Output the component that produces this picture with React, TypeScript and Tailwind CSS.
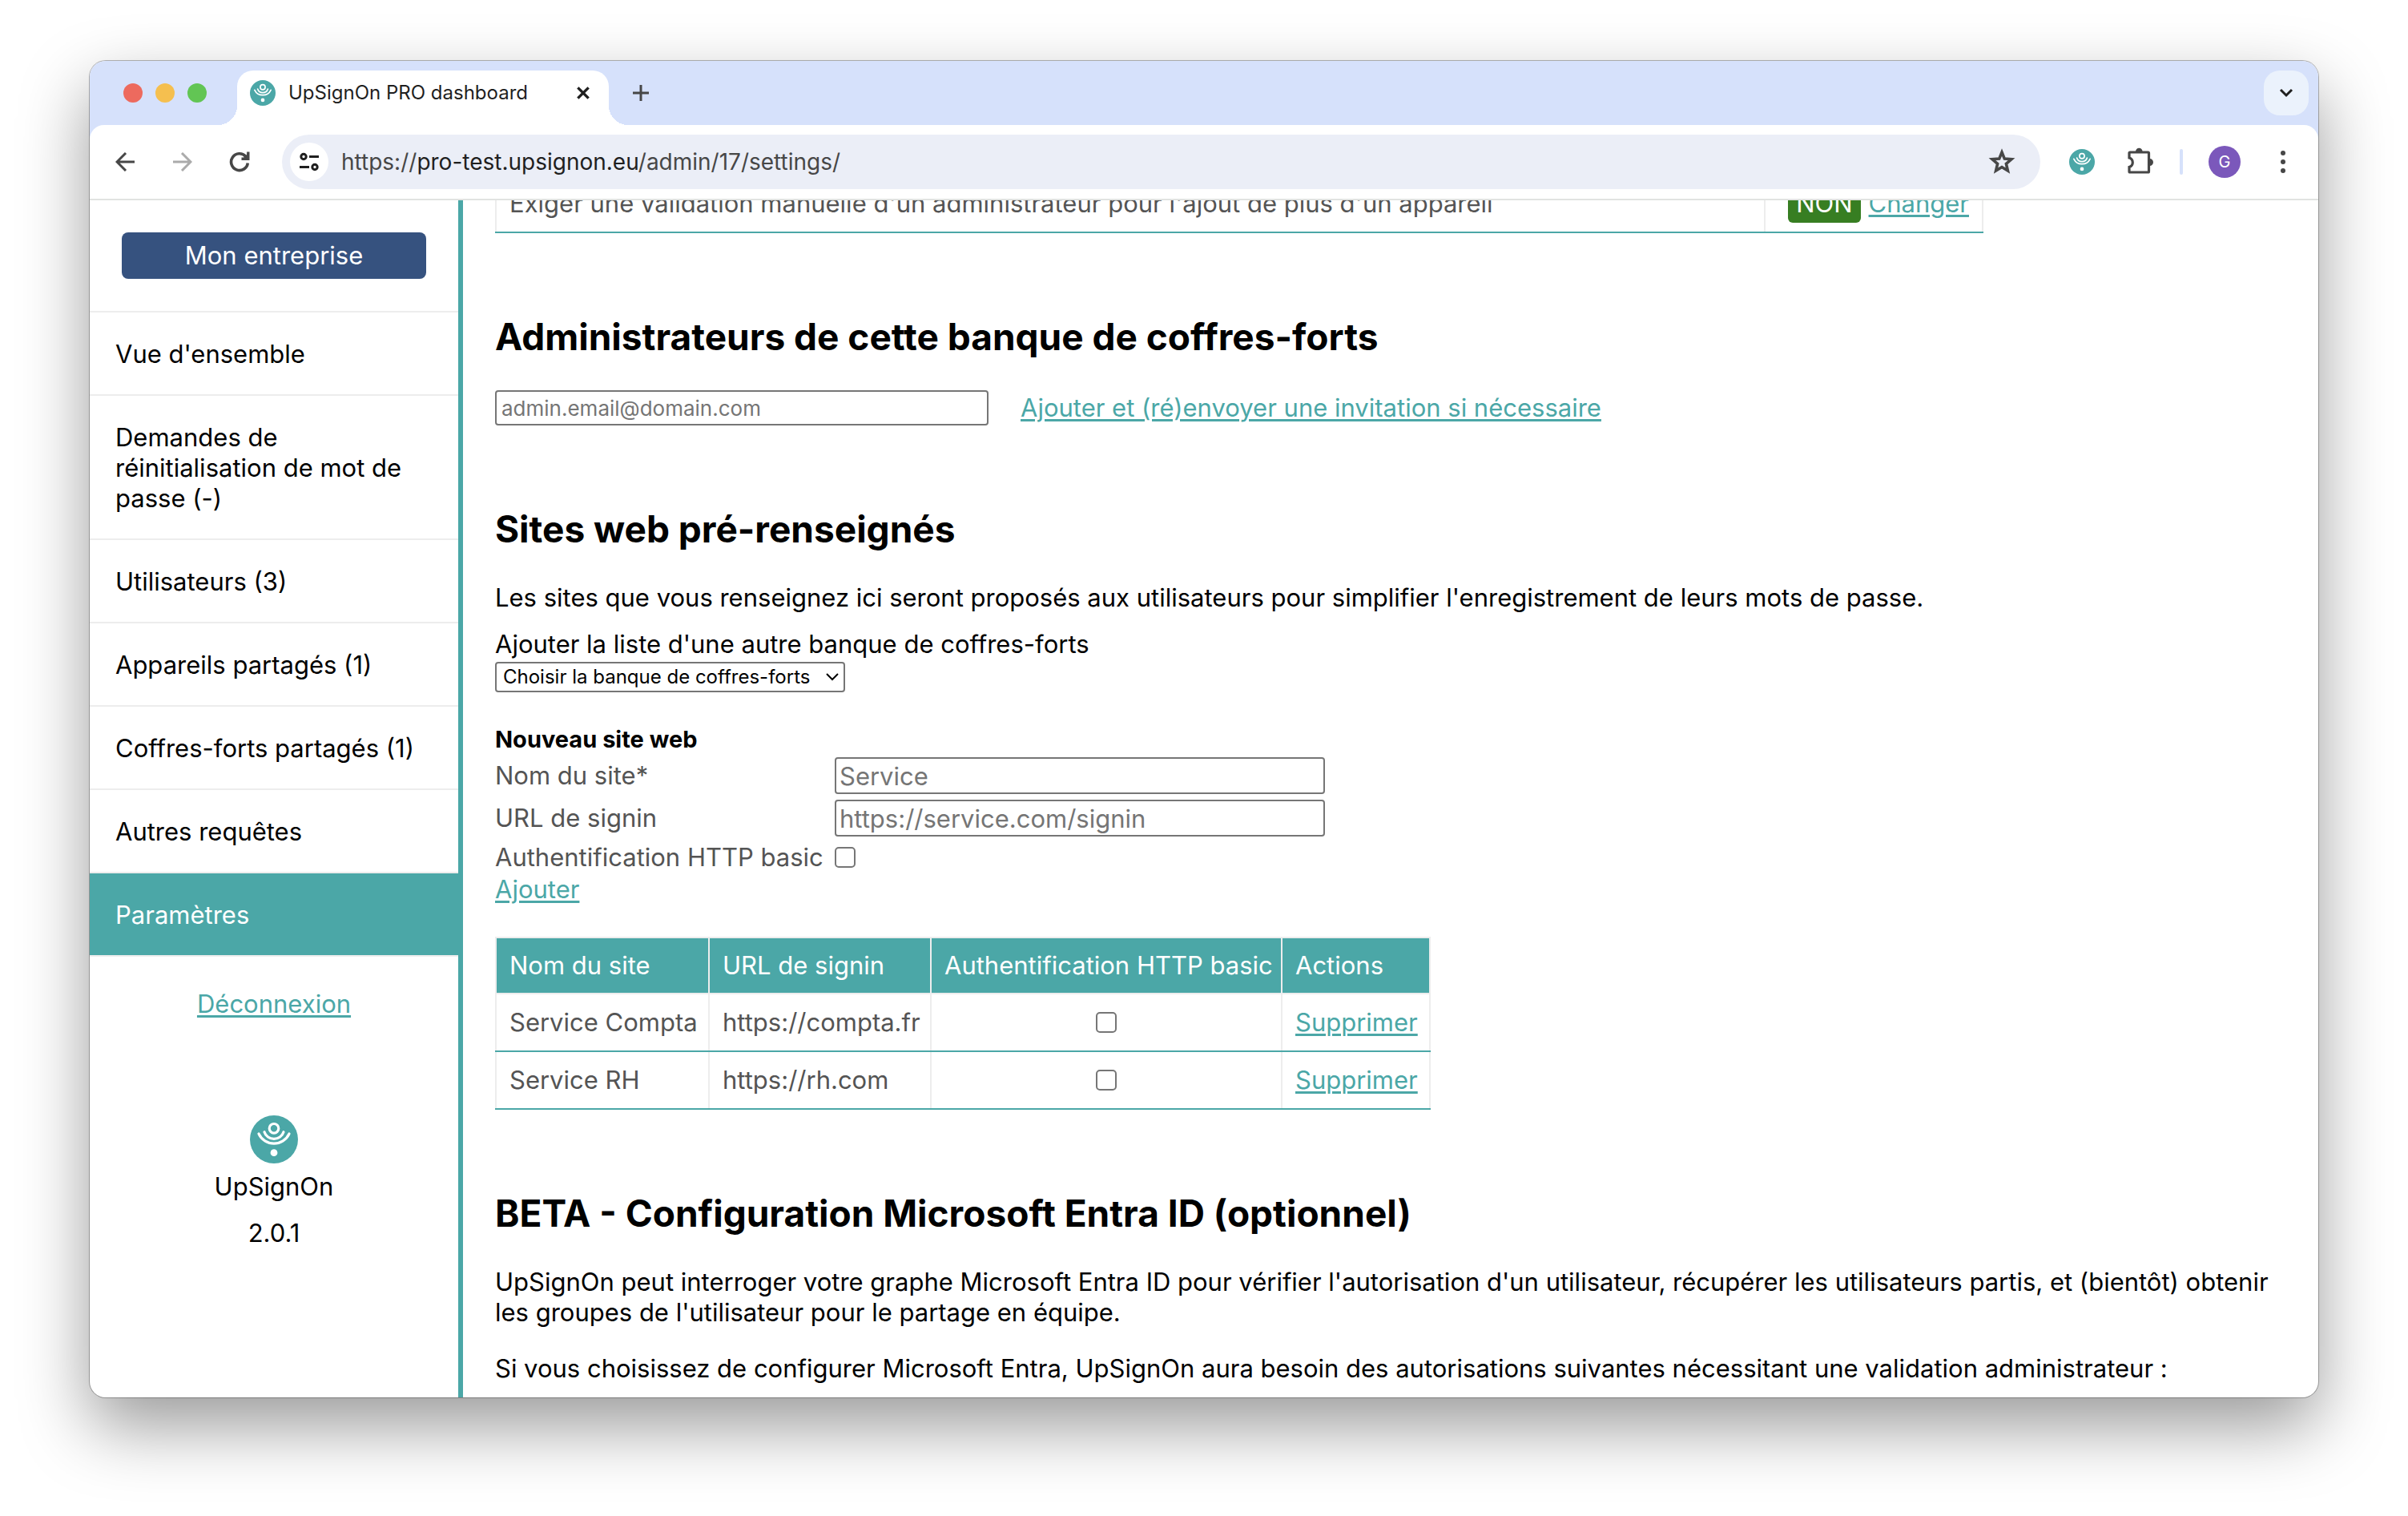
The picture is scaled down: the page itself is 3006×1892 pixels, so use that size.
import React from "react";

const LINK = "text-[#4ba7a7] underline decoration-[3px] underline-offset-3";
const FIELD = "border-2 border-[#767676] rounded bg-white text-black placeholder:text-[#757575]";
const CHECK =
  "appearance-none block w-[26px] h-[26px] border-2 border-[#767676] rounded-[5px] bg-white";
const HEAD = "border-2 border-[#ededed] h-[70px] pl-4 pr-2 font-normal";
const CELL = "border-x-2 border-x-[#ededed] border-b-2 border-b-[#4ba7a7] h-[72px]";

function Logo({ className }: { className: string }) {
  return (
    <svg viewBox="0 0 60 60" className={className} aria-hidden="true">
      <circle cx="30" cy="30" r="30" fill="#4ba7a7" />
      <g fill="none" stroke="#fff" strokeWidth="3.2" strokeLinecap="round">
        <circle cx="30" cy="16.3" r="5.8" />
        <path d="M18 20.700a12.600 12.600 0 0 0 24 0" />
        <path d="M11 23a21 21 0 0 0 38 0" />
      </g>
      <circle cx="30" cy="46.7" r="4.400" fill="#fff" />
    </svg>
  );
}

function StrokeIcon({ d, className, width = 4 }: { d: string; className: string; width?: number }) {
  return (
    <svg viewBox="0 0 24 24" className={className} aria-hidden="true">
      <path d={d} fill="none" stroke="currentColor" strokeWidth={width} />
    </svg>
  );
}

function RefreshIcon() {
  return (
    <svg viewBox="0 0 26 26" className="w-[26px] h-[26px]" aria-hidden="true">
      <path d="M23.300 14.500a10.400 10.400 0 1 1-2.600-8.300" fill="none" stroke="currentColor" strokeWidth="3.600" />
      <path d="M15.500 9.300h8.300V0.500" fill="none" stroke="currentColor" strokeWidth="3.400" />
      <path d="M17 9l7-7v7z" fill="currentColor" />
    </svg>
  );
}

function TuneIcon() {
  return (
    <svg viewBox="0 0 24 24" className="w-6 h-6" aria-hidden="true">
      <g fill="none" stroke="#1f1f1f" strokeWidth="3">
        <circle cx="5" cy="5.5" r="3.200" />
        <path d="M12 5.500h12M0 18.500h12" />
        <circle cx="19" cy="18.5" r="3.200" />
      </g>
    </svg>
  );
}

function StarIcon() {
  return (
    <svg viewBox="0 0 34 34" className="w-[34px] h-[34px]" aria-hidden="true">
      <path
        d="M17 5l3.300 8.100 8.700.700-6.600 5.700 2 8.500-7.400-4.500-7.400 4.500 2-8.500-6.600-5.700 8.700-.700z"
        fill="none"
        stroke="currentColor"
        strokeWidth="3.600"
      />
    </svg>
  );
}

function PuzzleIcon() {
  return (
    <svg viewBox="0 0 34 36" className="w-[34px] h-9" aria-hidden="true">
      <path
        d="M4 8h22.500a1 1 0 0 1 1 1v23a1 1 0 0 1-1 1h-22.500a1 1 0 0 1-1-1v-5.500a6 6 0 0 0 0-11.500v-6a1 1 0 0 1 1-1z"
        fill="none"
        stroke="currentColor"
        strokeWidth="3.200"
      />
      <path d="M11 7a4.300 4.300 0 0 1 8.600 0zM28.500 16a4.500 4.500 0 0 1 0 9z" fill="currentColor" />
    </svg>
  );
}

function DotsIcon() {
  return (
    <svg viewBox="0 0 6 28" className="w-[6px] h-7" aria-hidden="true">
      <g fill="currentColor">
        <circle cx="3" cy="3" r="3" />
        <circle cx="3" cy="14" r="3" />
        <circle cx="3" cy="25" r="3" />
      </g>
    </svg>
  );
}

function TabStrip() {
  return (
    <div className="h-20 shrink-0 bg-[#d6e1fb] flex items-end pl-[42px] pr-3">
      <div className="flex gap-4 self-center">
        <span className="w-6 h-6 rounded-full bg-[#ed6a5e]" />
        <span className="w-6 h-6 rounded-full bg-[#f5bf4f]" />
        <span className="w-6 h-6 rounded-full bg-[#62c554]" />
      </div>
      <div className="relative ml-[38px] w-[464px] h-[68px] rounded-t-[20px] bg-white flex items-center pl-4 pr-[22px] pb-3 before:absolute before:bottom-0 before:-left-6 before:w-6 before:h-6 before:bg-[radial-gradient(circle_at_0_0,transparent_24px,white_24px)] after:absolute after:bottom-0 after:-right-6 after:w-6 after:h-6 after:bg-[radial-gradient(circle_at_100%_0,transparent_24px,white_24px)]">
        <Logo className="w-8 h-8" />
        <span className="ml-4 text-[24px] text-[#1f1f1f] whitespace-nowrap">UpSignOn PRO dashboard</span>
        <button type="button" aria-label="Fermer l'onglet" className="ml-auto text-[#1f1f1f]">
          <StrokeIcon d="M4 4l16 16M20 4L4 20" width={4} className="w-5 h-5" />
        </button>
      </div>
      <button type="button" aria-label="Nouvel onglet" className="ml-7 mb-7 text-[#474747]">
        <StrokeIcon d="M12 2v20M2 12h20" width={3} className="w-6 h-6" />
      </button>
      <button
        type="button"
        aria-label="Rechercher des onglets"
        className="ml-auto mb-3 w-14 h-14 rounded-[20px] bg-[#ebf2fc] text-[#1f1f1f] flex items-center justify-center"
      >
        <StrokeIcon d="M5 8l7 7 7-7" width={3} className="w-6 h-6" />
      </button>
    </div>
  );
}

function Toolbar() {
  return (
    <div className="shrink-0 bg-[#d6e1fb]">
      <div className="h-[94px] bg-white rounded-t-[18px] border-b-2 border-[#e1e3e1] flex items-center pl-8 pr-[41px] text-[#474747]">
        <button type="button" aria-label="Précédent">
          <StrokeIcon d="M24 12H3M13 1L2 12l11 11" width={3} className="w-6 h-6" />
        </button>
        <button type="button" aria-label="Suivant" className="ml-12 text-[#ababab]">
          <StrokeIcon d="M0 12h21M11 1l11 11-11 11" width={3} className="w-6 h-6" />
        </button>
        <button type="button" aria-label="Actualiser" className="ml-[46px]">
          <RefreshIcon />
        </button>
        <div className="ml-10 flex-1 h-[68px] rounded-full bg-[#ebeef7] flex items-center pl-[10px] pr-[31px]">
          <button type="button" aria-label="Informations du site" className="w-12 h-12 rounded-full bg-white flex items-center justify-center">
            <TuneIcon />
          </button>
          <div className="ml-4 text-[28px] flex-1 whitespace-nowrap">
            https://<span className="text-[#1f1f1f]">pro-test.upsignon.eu</span>/admin/17/settings/
          </div>
          <button type="button" aria-label="Ajouter aux favoris">
            <StarIcon />
          </button>
        </div>
        <div className="ml-9 flex items-center">
          <Logo className="w-8 h-8" />
          <button type="button" aria-label="Extensions" className="ml-10 pb-1">
            <PuzzleIcon />
          </button>
          <span className="ml-8 w-1 h-8 rounded-sm bg-[#d6e1fb]" />
          <button type="button" aria-label="Profil" className="ml-8 w-10 h-10 rounded-full bg-[#7b58bb] text-white text-[20px]">
            G
          </button>
          <button type="button" aria-label="Menu" className="ml-[50px]">
            <DotsIcon />
          </button>
        </div>
      </div>
    </div>
  );
}

const NAV = [
  "Vue d'ensemble",
  "Demandes de réinitialisation de mot de passe (-)",
  "Utilisateurs (3)",
  "Appareils partagés (1)",
  "Coffres-forts partagés (1)",
  "Autres requêtes",
];

function Sidebar() {
  return (
    <aside className="w-[466px] shrink-0 border-r-[6px] border-[#4ba7a7] flex flex-col">
      <div className="px-10 py-10">
        <button type="button" className="w-full h-[58px] rounded-lg bg-[#36527f] text-white">
          Mon entreprise
        </button>
      </div>
      <nav className="flex flex-col border-b-2 border-[#ededed]">
        {NAV.map((label) => (
          <a key={label} href="#" className="border-t-2 border-[#ededed] pl-8 pr-12 pt-[33px] pb-[31px]">
            {label}
          </a>
        ))}
        <a href="#" className="border-t-2 border-[#ededed] px-8 pt-[33px] pb-[31px] bg-[#4ba7a7] bg-clip-padding text-white">
          Paramètres
        </a>
      </nav>
      <div className="flex flex-col items-center pt-10">
        <a href="#" className={LINK}>
          Déconnexion
        </a>
        <Logo className="mt-30 w-[60px] h-[60px]" />
        <p className="mt-[10px]">UpSignOn</p>
        <p className="mt-5">2.0.1</p>
      </div>
    </aside>
  );
}

const SITES = [
  { name: "Service Compta", url: "https://compta.fr" },
  { name: "Service RH", url: "https://rh.com" },
];

function Settings() {
  return (
    <main className="flex-1 min-w-0 px-10 overflow-hidden">
      <table className="-mt-8 w-[1858px] border-collapse text-[#545454]">
        <tbody>
          <tr>
            <td className={`${CELL} px-4`}>
              Exiger une validation manuelle d'un administrateur pour l'ajout de plus d'un appareil
            </td>
            <td className={`${CELL} w-[272px] pr-4`}>
              <div className="flex items-center justify-end gap-[10px]">
                <span className="h-12 px-[10px] rounded-md bg-[#377e22] text-white flex items-center">NON</span>
                <a href="#" className={LINK}>
                  Changer
                </a>
              </div>
            </td>
          </tr>
        </tbody>
      </table>

      <section>
        <h2 className="mt-25 text-[46px] leading-[58px] font-bold">
          Administrateurs de cette banque de coffres-forts
        </h2>
        <div className="mt-[38px] flex items-center gap-10">
          <input
            type="email"
            aria-label="Adresse email de l'administrateur"
            placeholder="admin.email@domain.com"
            className={`${FIELD} w-[616px] h-11 px-[6px] text-[26px]`}
          />
          <a href="#" className={LINK}>
            Ajouter et (ré)envoyer une invitation si nécessaire
          </a>
        </div>
      </section>

      <section>
        <h2 className="mt-25 text-[46px] leading-[58px] font-bold">Sites web pré-renseignés</h2>
        <p className="mt-[38px]">
          Les sites que vous renseignez ici seront proposés aux utilisateurs pour simplifier l'enregistrement de leurs
          mots de passe.
        </p>
        <label htmlFor="bank" className="mt-5 block">
          Ajouter la liste d'une autre banque de coffres-forts
        </label>
        <div className="mt-[3px] relative w-[437px]">
          <select
            id="bank"
            className="appearance-none block w-full h-[38px] border-2 border-[#767676] rounded bg-white pl-2 text-[24px] leading-[34px]"
          >
            <option>Choisir la banque de coffres-forts</option>
          </select>
          <svg
            viewBox="0 0 16 10"
            className="absolute right-2 top-[14px] w-4 h-[10px] pointer-events-none"
            aria-hidden="true"
          >
            <path d="M1 1l7 7 7-7" fill="none" stroke="#000" strokeWidth="2" />
          </svg>
        </div>

        <h3 className="mt-10 text-[29px] font-bold">Nouveau site web</h3>
        <form className="mt-[3px] grid grid-cols-[424px_612px] items-center gap-y-[7px] text-[#545454]">
          <label htmlFor="name">Nom du site*</label>
          <input id="name" type="text" placeholder="Service" className={`${FIELD} h-[46px] px-1`} />
          <label htmlFor="url">URL de signin</label>
          <input id="url" type="text" placeholder="https://service.com/signin" className={`${FIELD} h-[46px] px-1`} />
          <label htmlFor="basic">Authentification HTTP basic</label>
          <input id="basic" type="checkbox" className={CHECK} />
        </form>
        <a href="#" className={`mt-[2px] inline-block align-top ${LINK}`}>
          Ajouter
        </a>

        <table className="mt-10 border-collapse text-[#545454] text-left">
          <thead>
            <tr className="bg-[#4ba7a7] text-white">
              <th className={`${HEAD} min-w-[266px]`}>Nom du site</th>
              <th className={`${HEAD} min-w-[277px]`}>URL de signin</th>
              <th className={`${HEAD} min-w-[438px]`}>Authentification HTTP basic</th>
              <th className={`${HEAD} min-w-[185px]`}>Actions</th>
            </tr>
          </thead>
          <tbody>
            {SITES.map((site) => (
              <tr key={site.name}>
                <td className={`${CELL} pl-4 pr-2`}>{site.name}</td>
                <td className={`${CELL} pl-4 pr-2`}>{site.url}</td>
                <td className={CELL}>
                  <input
                    type="checkbox"
                    aria-label={`Authentification HTTP basic pour ${site.name}`}
                    className={`${CHECK} mx-auto`}
                  />
                </td>
                <td className={`${CELL} pl-4 pr-2`}>
                  <a href="#" className={LINK}>
                    Supprimer
                  </a>
                </td>
              </tr>
            ))}
          </tbody>
        </table>
      </section>

      <section>
        <h2 className="mt-25 text-[46px] leading-[58px] font-bold">BETA - Configuration Microsoft Entra ID (optionnel)</h2>
        <p className="mt-[38px]">
          UpSignOn peut interroger votre graphe Microsoft Entra ID pour vérifier l'autorisation d'un utilisateur,
          récupérer les utilisateurs partis, et (bientôt) obtenir les groupes de l'utilisateur pour le partage en
          équipe.
        </p>
        <p className="mt-8">
          Si vous choisissez de configurer Microsoft Entra, UpSignOn aura besoin des autorisations suivantes nécessitant
          une validation administrateur :
        </p>
      </section>
    </main>
  );
}

export default function App() {
  return (
    <div className="h-screen flex flex-col bg-white px-28 pt-[76px] pb-37 font-['Inter',sans-serif] text-black">
      <div className="flex-1 min-h-0 flex flex-col rounded-[20px] overflow-hidden bg-white shadow-[0_0_0_1px_rgba(0,0,0,0.28),0_36px_86px_rgba(0,0,0,0.4)]">
        <TabStrip />
        <Toolbar />
        <div className="flex-1 min-h-0 flex overflow-hidden text-[31px] leading-[38px]">
          <Sidebar />
          <Settings />
        </div>
      </div>
    </div>
  );
}
